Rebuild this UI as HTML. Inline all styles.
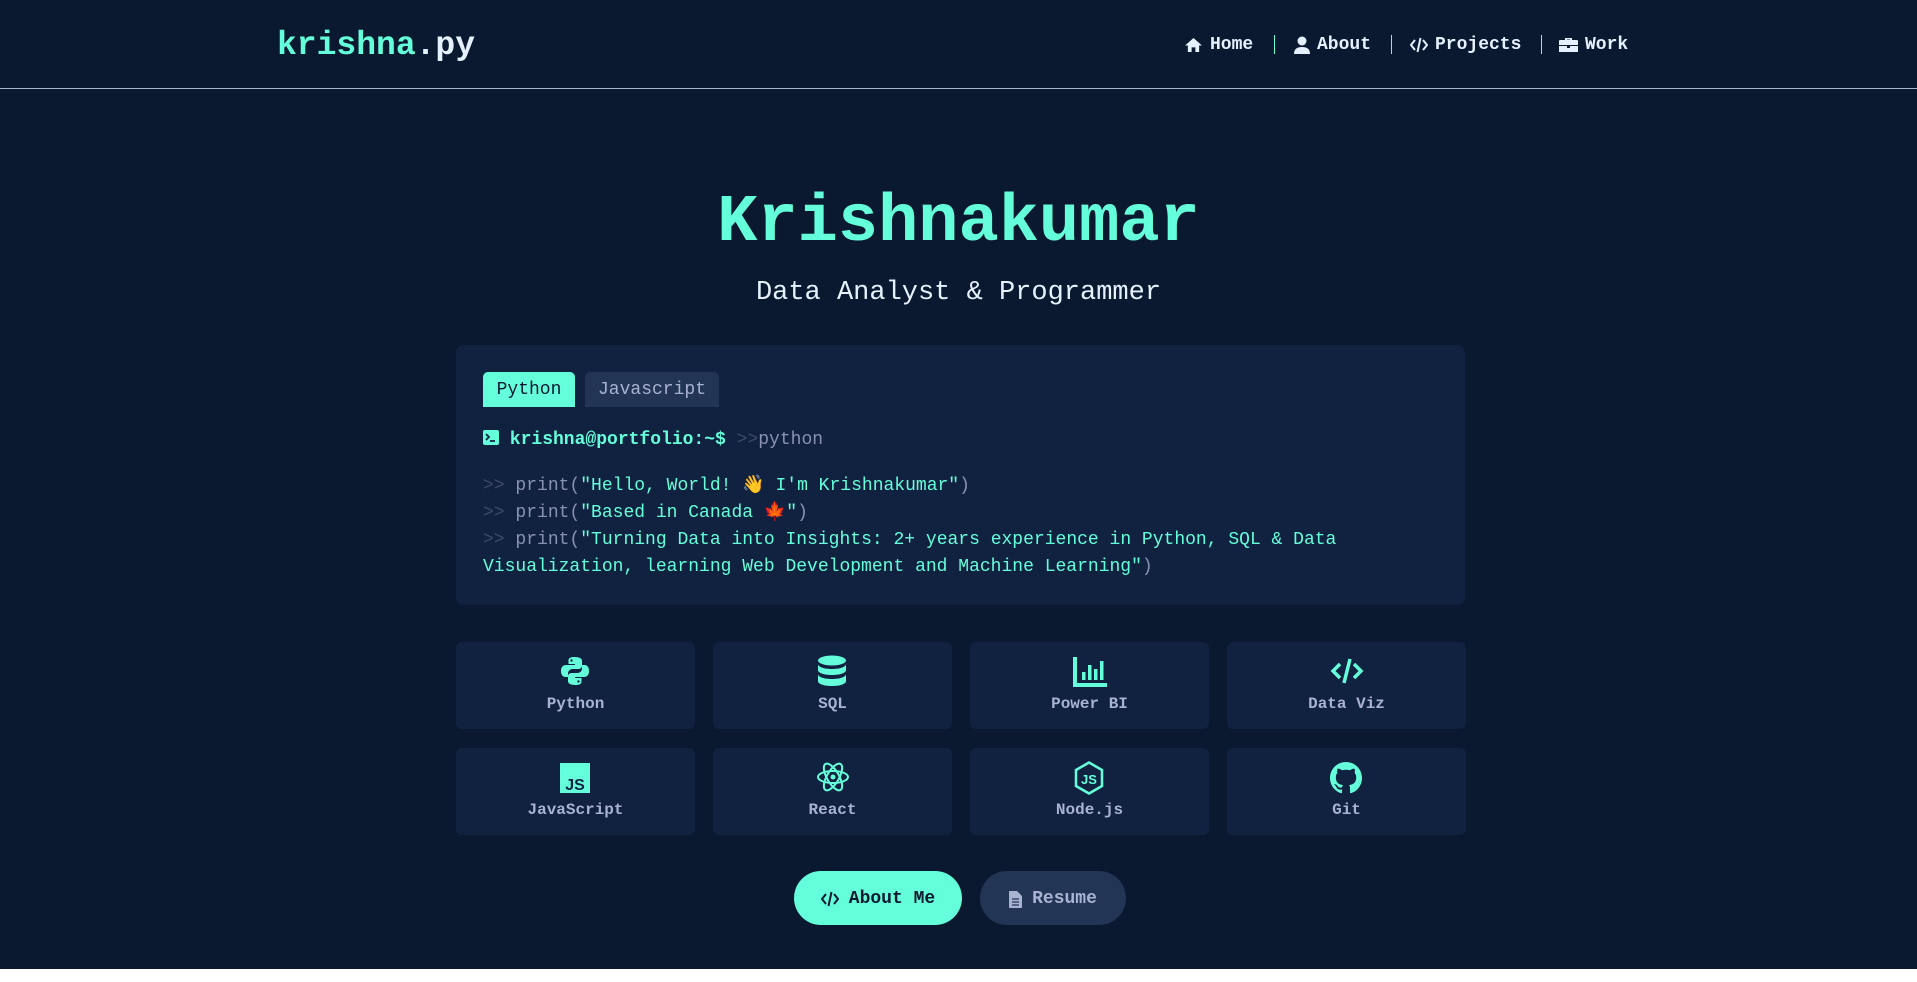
<!DOCTYPE html>
<html><head><meta charset="utf-8"><style>
*{margin:0;padding:0;box-sizing:border-box}
html,body{width:1917px;height:982px;background:#fff;overflow:hidden}
body{font-family:"Liberation Mono","DejaVu Sans Mono",monospace}
#page{position:absolute;left:0;top:0;width:1917px;height:969px;background:#0a192f}
.hdr{position:absolute;left:0;top:0;width:1917px;height:89px;border-bottom:1px solid #a8b2d1}
.logo{position:absolute;left:277px;top:24px;font-size:33px;font-weight:bold;color:#64ffda;line-height:44px}
.logo span{color:#e6f1ff}
.nav{position:absolute;top:33px;font-size:18px;font-weight:bold;color:#e6f1ff;line-height:24px;display:flex;align-items:center}
.nav svg{margin-right:7px}
.sep{position:absolute;top:35px;width:1px;height:19px;background:#64ffda}
.title{position:absolute;left:0;width:1917px;text-align:center;top:178px;font-size:67px;font-weight:bold;color:#64ffda;line-height:90px}
.sub{position:absolute;left:0;width:1917px;text-align:center;top:275px;font-size:27px;color:#e6f1ff;line-height:36px}
.card{position:absolute;left:456px;top:345px;width:1009px;height:260px;background:#112240;border-radius:8px}
.tab{position:absolute;top:27px;height:35px;font-size:18px;line-height:36px;text-align:center;border-radius:5px 5px 0 0}
.code{position:absolute;left:27px;font-size:18px;line-height:27px;color:#64ffda;white-space:pre}
.g{color:#3b4a66}.p{color:#8892b0}
.sk{position:absolute;width:239px;height:87px;background:#112240;border-radius:6px;text-align:center}
.sk svg{position:absolute;left:103px;top:13px}
.sk div{position:absolute;left:0;right:0;top:51px;font-size:16px;font-weight:bold;color:#a8b2d1;line-height:22px}
.btn{position:absolute;top:871px;height:54px;padding-top:2px;border-radius:27px;font-size:18px;font-weight:bold;display:flex;align-items:center;justify-content:center;gap:10px}
</style></head><body><div id="page">
<div class="hdr">
<div class="logo">krishna<span>.py</span></div>
<div class="nav" style="left:1184px"><svg width="19" height="16" viewBox="0 0 20 17"><path d="M10 1L1 9h3v7h4v-5h4v5h4V9h3z" fill="#e6f1ff"/></svg>Home</div>
<div class="sep" style="left:1274px"></div>
<div class="nav" style="left:1294px"><svg width="16" height="18" viewBox="0 0 16 18"><circle cx="8" cy="5" r="4.5" fill="#e6f1ff"/><path d="M0 18c0-5 3-7 8-7s8 2 8 7z" fill="#e6f1ff"/></svg>About</div>
<div class="sep" style="left:1391px"></div>
<div class="nav" style="left:1410px"><svg width="18" height="16" viewBox="0 0 18 16"><path d="M5 3L1 8l4 5M13 3l4 5-4 5M10.5 1L7.5 15" stroke="#e6f1ff" stroke-width="2" fill="none"/></svg>Projects</div>
<div class="sep" style="left:1541px"></div>
<div class="nav" style="left:1559px"><svg width="19" height="16" viewBox="0 0 19 16"><path d="M6 3V1h7v2h5a1 1 0 011 1v4H0V4a1 1 0 011-1zM8 3h3V2.5H8zM0 9h8v2h3V9h8v6H0z" fill="#e6f1ff"/></svg>Work</div>
</div>
<div class="title">Krishnakumar</div>
<div class="sub">Data Analyst &amp; Programmer</div>
<div class="card">
<div class="tab" style="left:27px;width:92px;background:#64ffda;color:#0a192f">Python</div>
<div class="tab" style="left:129px;width:134px;background:#233554;color:#a8b2d1">Javascript</div>
<div class="code" style="top:82px;font-weight:bold"><svg width="16" height="15" viewBox="0 0 16 15" style="vertical-align:-1px"><rect width="16" height="15" rx="2" fill="#64ffda"/><path d="M3 4l3 3-3 3M7 11h5" stroke="#112240" stroke-width="1.8" fill="none"/></svg> krishna@portfolio:~$ <span class="g" style="font-weight:normal">&gt;&gt;</span><span class="p" style="font-weight:normal">python</span></div>
<div class="code" style="top:128px"><span class="g">&gt;&gt;</span> <span class="p">print(</span>"Hello, World! 👋 I'm Krishnakumar"<span class="p">)</span>
<span class="g">&gt;&gt;</span> <span class="p">print(</span>"Based in Canada 🍁"<span class="p">)</span>
<span class="g">&gt;&gt;</span> <span class="p">print(</span>"Turning Data into Insights: 2+ years experience in Python, SQL &amp; Data
Visualization, learning Web Development and Machine Learning"<span class="p">)</span></div>
</div>

<div class="sk" style="left:456px;top:642px"><svg width="32" height="32" viewBox="0 0 32 32"><path d="M15.5 2c-6 0-6 2.5-6 4v3h6.5v1H7c-3 0-5 2-5 6s2 6 4.5 6H9v-3.5c0-2.5 2-4.5 4.5-4.5h6c2 0 3.5-1.5 3.5-3.5V6c0-2-1.5-4-7.5-4z" fill="#64ffda"/><circle cx="12.5" cy="5.5" r="1.2" fill="#112240"/><path d="M16.5 30c6 0 6-2.5 6-4v-3H16v-1h9c3 0 5-2 5-6s-2-6-4.5-6H23v3.5c0 2.5-2 4.5-4.5 4.5h-6C10.5 18 9 19.5 9 21.5V26c0 2 1.5 4 7.5 4z" fill="#64ffda"/><circle cx="19.5" cy="26.5" r="1.2" fill="#112240"/></svg><div>Python</div></div>
<div class="sk" style="left:713px;top:642px"><svg width="32" height="32" viewBox="0 0 32 32"><ellipse cx="16" cy="5.5" rx="14" ry="5" fill="#64ffda"/><path d="M2 9c0 3 6 5 14 5s14-2 14-5v6c0 3-6 5-14 5S2 18 2 15zM2 19c0 3 6 5 14 5s14-2 14-5v7c0 3-6 5-14 5S2 29 2 26z" fill="#64ffda"/></svg><div>SQL</div></div>
<div class="sk" style="left:970px;top:642px"><svg width="34" height="32" viewBox="0 0 34 32"><path d="M2 2v28h32" stroke="#64ffda" stroke-width="4" fill="none"/><rect x="9" y="17" width="3.5" height="8" fill="#64ffda"/><rect x="15" y="10" width="3.5" height="15" fill="#64ffda"/><rect x="21" y="14" width="3.5" height="11" fill="#64ffda"/><rect x="27" y="6" width="3.5" height="19" fill="#64ffda"/></svg><div>Power BI</div></div>
<div class="sk" style="left:1227px;top:642px"><svg width="34" height="32" viewBox="0 0 34 32"><path d="M10 9L3 16l7 7M24 9l7 7-7 7M20 4l-6 24" stroke="#64ffda" stroke-width="3.5" fill="none"/></svg><div>Data Viz</div></div>

<div class="sk" style="left:456px;top:748px"><svg width="32" height="32" viewBox="0 0 32 32"><rect x="1" y="2" width="30" height="30" fill="#64ffda"/><text x="16" y="29" text-anchor="middle" font-family="Liberation Sans,sans-serif" font-weight="bold" font-size="16" fill="#112240">JS</text></svg><div>JavaScript</div></div>
<div class="sk" style="left:713px;top:748px"><svg width="34" height="32" viewBox="0 0 34 32"><g stroke="#64ffda" stroke-width="2" fill="none"><ellipse cx="17" cy="16" rx="15" ry="6"/><ellipse cx="17" cy="16" rx="15" ry="6" transform="rotate(60 17 16)"/><ellipse cx="17" cy="16" rx="15" ry="6" transform="rotate(120 17 16)"/></g><circle cx="17" cy="16" r="2.5" fill="#64ffda"/></svg><div>React</div></div>
<div class="sk" style="left:970px;top:748px"><svg width="32" height="34" viewBox="0 0 32 34"><path d="M16 1.5L29 9v16l-13 7.5L3 25V9z" stroke="#64ffda" stroke-width="2.5" fill="none"/><text x="16" y="23" text-anchor="middle" font-family="Liberation Sans,sans-serif" font-weight="bold" font-size="13" fill="#64ffda">JS</text></svg><div>Node.js</div></div>
<div class="sk" style="left:1227px;top:748px"><svg width="32" height="34" viewBox="0 0 16 16"><path fill="#64ffda" d="M8 0C3.580 0 0 3.58 0 8c0 3.54 2.29 6.53 5.47 7.59.4.07.55-.17.55-.38 0-.19-.01-.82-.01-1.49-2.010.37-2.53-.49-2.69-.94-.09-.23-.48-.94-.82-1.13-.28-.15-.68-.52-.01-.53.63-.01 1.08.58 1.23.82.72 1.21 1.87.87 2.33.66.07-.52.28-.87.51-1.07-1.78-.2-3.640-.89-3.640-3.95 0-.87.31-1.59.82-2.15-.08-.2-.36-1.02.08-2.12 0 0 .67-.21 2.2.82.64-.18 1.32-.27 2-.27.68 0 1.36.09 2 .27 1.53-1.04 2.2-.82 2.2-.82.44 1.1.16 1.92.08 2.12.51.56.82 1.27.82 2.15 0 3.07-1.87 3.75-3.65 3.95.29.25.54.73.54 1.48 0 1.07-.01 1.93-.01 2.2 0 .21.15.46.55.38A8.013 8.013 0 0016 8c0-4.42-3.58-8-8-8z"/></svg><div>Git</div></div>

<div class="btn" style="left:794px;width:168px;background:#64ffda;color:#0a192f"><svg width="18" height="16" viewBox="0 0 18 16"><path d="M5 3L1 8l4 5M13 3l4 5-4 5M10.5 1L7.5 15" stroke="#0a192f" stroke-width="2" fill="none"/></svg>About Me</div>
<div class="btn" style="left:980px;width:146px;background:#233554;color:#a8b2d1"><svg width="13" height="17" viewBox="0 0 13 17"><path d="M0 0h8l5 5v12H0z" fill="#a8b2d1"/><path d="M3 8h7M3 11h7M3 14h7" stroke="#233554" stroke-width="1.3"/></svg>Resume</div>
</div></body></html>
